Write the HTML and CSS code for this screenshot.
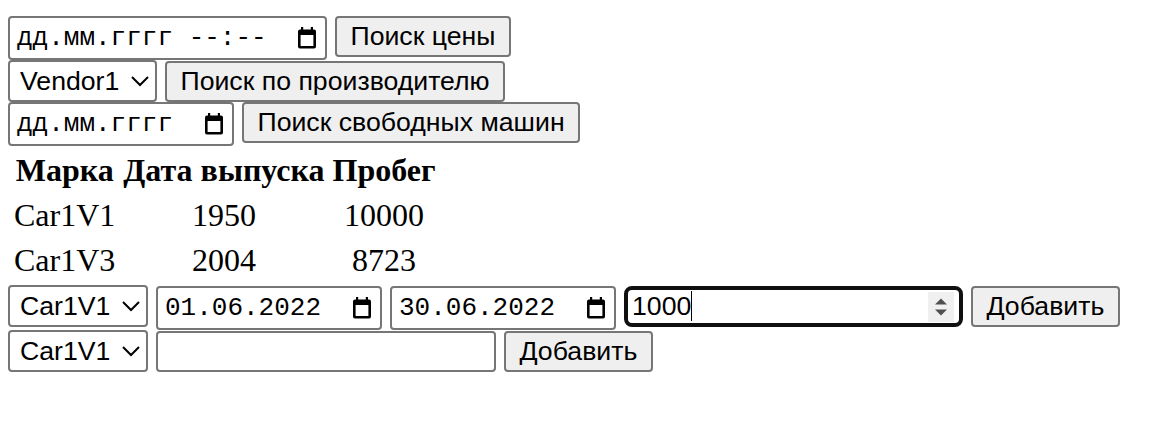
FILE: index.html
```html
<!DOCTYPE html>
<html lang="ru">
<head>
<meta charset="utf-8">
<title>Машины</title>
<link rel="stylesheet" href="styles.css">
</head>
<body>
<div class="page">
  <form class="row">
    <span class="date date-time"><span class="date-text">дд.мм.гггг --:--</span><svg class="cal" viewBox="0 0 20 22" aria-hidden="true"><rect x="4" y="0" width="2.2" height="4.5"/><rect x="13.8" y="0" width="2.2" height="4.5"/><path fill-rule="evenodd" d="M3 2.5h14a2 2 0 0 1 2 2v15a2 2 0 0 1-2 2H3a2 2 0 0 1-2-2v-15a2 2 0 0 1 2-2zM3.6 8v11h12.8V8z"/></svg></span>
    <button type="button" class="ctl btn">Поиск цены</button>
  </form>
  <form class="row">
    <select class="ctl sel"><option>Vendor1</option><option>Vendor2</option></select>
    <button type="button" class="ctl btn">Поиск по производителю</button>
  </form>
  <form class="row">
    <span class="date date-only"><span class="date-text">дд.мм.гггг</span><svg class="cal" viewBox="0 0 20 22" aria-hidden="true"><rect x="4" y="0" width="2.2" height="4.5"/><rect x="13.8" y="0" width="2.2" height="4.5"/><path fill-rule="evenodd" d="M3 2.5h14a2 2 0 0 1 2 2v15a2 2 0 0 1-2 2H3a2 2 0 0 1-2-2v-15a2 2 0 0 1 2-2zM3.6 8v11h12.8V8z"/></svg></span>
    <button type="button" class="ctl btn">Поиск свободных машин</button>
  </form>
  <table class="cars">
    <tr><th>Марка</th><th>Дата выпуска</th><th>Пробег</th></tr>
    <tr><td>Car1V1</td><td>1950</td><td>10000</td></tr>
    <tr><td>Car1V3</td><td>2004</td><td>8723</td></tr>
  </table>
  <form class="row">
    <select class="ctl sel"><option>Car1V1</option><option>Car1V3</option></select>
    <span class="date date-only"><span class="date-text">01.06.2022</span><svg class="cal" viewBox="0 0 20 22" aria-hidden="true"><rect x="4" y="0" width="2.2" height="4.5"/><rect x="13.8" y="0" width="2.2" height="4.5"/><path fill-rule="evenodd" d="M3 2.5h14a2 2 0 0 1 2 2v15a2 2 0 0 1-2 2H3a2 2 0 0 1-2-2v-15a2 2 0 0 1 2-2zM3.6 8v11h12.8V8z"/></svg></span>
    <span class="date date-only"><span class="date-text">30.06.2022</span><svg class="cal" viewBox="0 0 20 22" aria-hidden="true"><rect x="4" y="0" width="2.2" height="4.5"/><rect x="13.8" y="0" width="2.2" height="4.5"/><path fill-rule="evenodd" d="M3 2.5h14a2 2 0 0 1 2 2v15a2 2 0 0 1-2 2H3a2 2 0 0 1-2-2v-15a2 2 0 0 1 2-2zM3.6 8v11h12.8V8z"/></svg></span>
    <span class="num"><span class="num-text">1000<span class="caret"></span></span><svg class="spin" viewBox="0 0 26 30" aria-hidden="true"><rect x="0" y="0" width="26" height="30" fill="#f0f0f0"/><path d="M7 12.5L13 6.5L19 12.5z" fill="#505050"/><path d="M7 17.5L13 23.5L19 17.5z" fill="#505050"/></svg></span>
    <button type="button" class="ctl btn">Добавить</button>
  </form>
  <form class="row">
    <select class="ctl sel"><option>Car1V1</option><option>Car1V3</option></select>
    <input type="text" class="ctl txt">
    <button type="button" class="ctl btn">Добавить</button>
  </form>
</div>
</body>
</html>
```
FILE: styles.css
```css
html, body {
  margin: 0;
  background: #ffffff;
}

.page {
  zoom: 2;
  padding: 8px 0 0 4px;
  font-family: "Liberation Serif", "Times New Roman", serif;
  font-size: 16px;
  color: #000000;
}

.row {
  margin: 0;
}

.ctl {
  font-family: "Liberation Sans", Arial, sans-serif;
  font-size: 13.333px;
  color: #000000;
}

.btn {
  background: #efefef;
  border: 1px solid #767676;
  border-radius: 2px;
  padding: 1.5px 6.75px;
}

.sel {
  background: #ffffff;
  border: 1px solid #767676;
  border-radius: 2px;
  padding: 1px 1.5px 1px 1px;
}

.txt {
  box-sizing: border-box;
  width: 170px;
  height: 20.5px;
  border: 1px solid #767676;
  border-radius: 2px;
  padding: 1px 2px;
  background: #ffffff;
}

.date {
  display: inline-flex;
  align-items: center;
  justify-content: space-between;
  box-sizing: border-box;
  height: 22px;
  border: 1px solid #767676;
  border-radius: 2px;
  padding: 0 4px 0 3.5px;
  background: #ffffff;
  font-family: "Liberation Mono", "DejaVu Sans Mono", monospace;
  font-size: 13px;
  color: #000000;
}

.date-time {
  width: 159.5px;
}

.date-only {
  width: 113px;
}

.cal {
  width: 10px;
  height: 11px;
  fill: #000000;
  flex: none;
}

.num {
  display: inline-flex;
  align-items: center;
  justify-content: space-between;
  box-sizing: border-box;
  width: 169.5px;
  height: 20.5px;
  border: 2px solid #101010;
  border-radius: 4px;
  padding: 0 2.5px 0 2px;
  background: #ffffff;
  font-family: "Liberation Sans", Arial, sans-serif;
  font-size: 13.333px;
  color: #000000;
}

.caret {
  display: inline-block;
  width: 0.5px;
  height: 15px;
  background: #000000;
  vertical-align: -3px;
}

.spin {
  width: 13px;
  height: 15px;
  flex: none;
}

.cars td {
  text-align: center;
}
```
